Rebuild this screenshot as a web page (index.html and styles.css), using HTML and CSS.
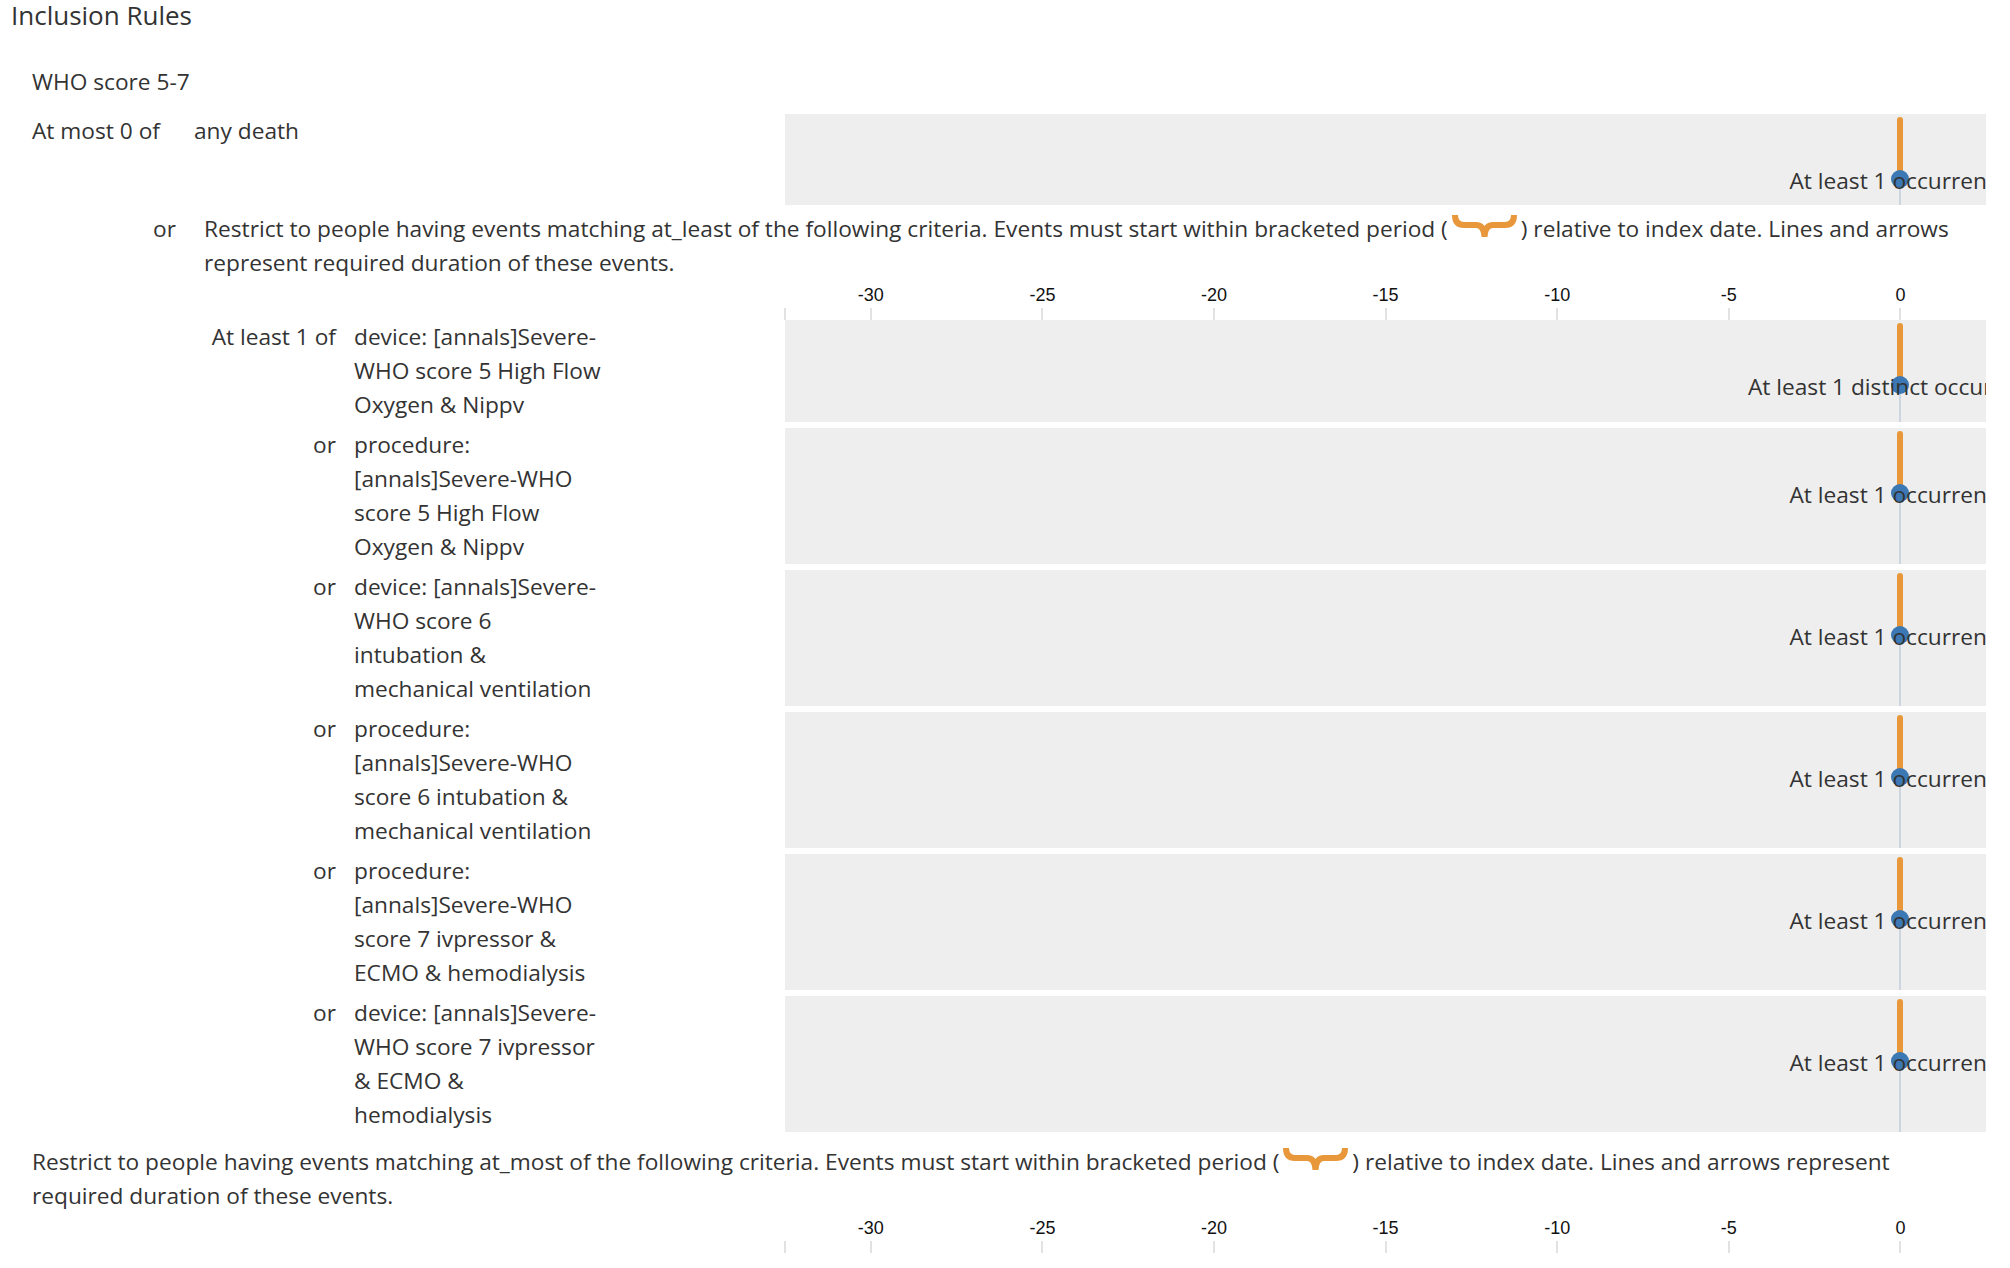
FILE: index.html
```html
<!DOCTYPE html>
<html>
<head>
<meta charset="utf-8">
<title>Inclusion Rules</title>
<link rel="stylesheet" href="styles.css">
</head>
<body>
<div class="page">
  <h1 class="title">Inclusion Rules</h1>
  <section class="rule">
    <div class="rule-name">WHO score 5-7</div>

    <div class="crit crit-top">
      <div class="crit-left">
        <span class="top-label">At most 0 of</span>
        <span class="top-desc">any death</span>
      </div>
      <div class="chart chart-top">
        <span class="stem"></span><span class="grid0"></span><span class="dot"></span>
        <span class="occ">At least 1 occurrence</span>
      </div>
    </div>

    <div class="group-head">
      <span class="or-word">or</span>
      <p class="restrict">Restrict to people having events matching at_least of the following criteria. Events must start within bracketed period (<svg class="brace" width="67" height="22" viewBox="0 0 67 22"><path d="M4 0 Q4 10 13 10 L25 10 Q33 10 33.5 22 Q34 10 42 10 L54 10 Q63 10 63 0"/></svg>) relative to index date. Lines and arrows represent required duration of these events.</p>
    </div>

    <div class="axis-row">
      <div class="axis">
        <span class="tick" style="left:0px"></span>
        <span class="tick" style="left:85.8px"><span class="tick-label">-30</span></span>
        <span class="tick" style="left:257.4px"><span class="tick-label">-25</span></span>
        <span class="tick" style="left:429px"><span class="tick-label">-20</span></span>
        <span class="tick" style="left:600.6px"><span class="tick-label">-15</span></span>
        <span class="tick" style="left:772.2px"><span class="tick-label">-10</span></span>
        <span class="tick" style="left:943.8px"><span class="tick-label">-5</span></span>
        <span class="tick" style="left:1115.4px"><span class="tick-label">0</span></span>
      </div>
    </div>

    <div class="crit nested">
      <div class="crit-left">
        <span class="n-label">At least 1 of</span>
        <span class="n-desc">device: [annals]Severe-<br>WHO score 5 High Flow<br>Oxygen &amp; Nippv</span>
      </div>
      <div class="chart">
        <span class="stem"></span><span class="grid0"></span><span class="dot"></span>
        <span class="occ">At least 1 distinct occurrence</span>
      </div>
    </div>

    <div class="crit nested">
      <div class="crit-left">
        <span class="n-label">or</span>
        <span class="n-desc">procedure:<br>[annals]Severe-WHO<br>score 5 High Flow<br>Oxygen &amp; Nippv</span>
      </div>
      <div class="chart">
        <span class="stem"></span><span class="grid0"></span><span class="dot"></span>
        <span class="occ">At least 1 occurrence</span>
      </div>
    </div>

    <div class="crit nested">
      <div class="crit-left">
        <span class="n-label">or</span>
        <span class="n-desc">device: [annals]Severe-<br>WHO score 6<br>intubation &amp;<br>mechanical ventilation</span>
      </div>
      <div class="chart">
        <span class="stem"></span><span class="grid0"></span><span class="dot"></span>
        <span class="occ">At least 1 occurrence</span>
      </div>
    </div>

    <div class="crit nested">
      <div class="crit-left">
        <span class="n-label">or</span>
        <span class="n-desc">procedure:<br>[annals]Severe-WHO<br>score 6 intubation &amp;<br>mechanical ventilation</span>
      </div>
      <div class="chart">
        <span class="stem"></span><span class="grid0"></span><span class="dot"></span>
        <span class="occ">At least 1 occurrence</span>
      </div>
    </div>

    <div class="crit nested">
      <div class="crit-left">
        <span class="n-label">or</span>
        <span class="n-desc">procedure:<br>[annals]Severe-WHO<br>score 7 ivpressor &amp;<br>ECMO &amp; hemodialysis</span>
      </div>
      <div class="chart">
        <span class="stem"></span><span class="grid0"></span><span class="dot"></span>
        <span class="occ">At least 1 occurrence</span>
      </div>
    </div>

    <div class="crit nested">
      <div class="crit-left">
        <span class="n-label">or</span>
        <span class="n-desc">device: [annals]Severe-<br>WHO score 7 ivpressor<br>&amp; ECMO &amp;<br>hemodialysis</span>
      </div>
      <div class="chart">
        <span class="stem"></span><span class="grid0"></span><span class="dot"></span>
        <span class="occ">At least 1 occurrence</span>
      </div>
    </div>

    <p class="restrict-bottom">Restrict to people having events matching at_most of the following criteria. Events must start within bracketed period (<svg class="brace" width="67" height="22" viewBox="0 0 67 22"><path d="M4 0 Q4 10 13 10 L25 10 Q33 10 33.5 22 Q34 10 42 10 L54 10 Q63 10 63 0"/></svg>) relative to index date. Lines and arrows represent required duration of these events.</p>

    <div class="axis-row">
      <div class="axis">
        <span class="tick" style="left:0px"></span>
        <span class="tick" style="left:85.8px"><span class="tick-label">-30</span></span>
        <span class="tick" style="left:257.4px"><span class="tick-label">-25</span></span>
        <span class="tick" style="left:429px"><span class="tick-label">-20</span></span>
        <span class="tick" style="left:600.6px"><span class="tick-label">-15</span></span>
        <span class="tick" style="left:772.2px"><span class="tick-label">-10</span></span>
        <span class="tick" style="left:943.8px"><span class="tick-label">-5</span></span>
        <span class="tick" style="left:1115.4px"><span class="tick-label">0</span></span>
      </div>
    </div>
  </section>
</div>
</body>
</html>
```

FILE: styles.css
```css
* { box-sizing: border-box; }
html, body { margin: 0; padding: 0; background: #fff; }
body {
  font-family: "Open Sans", "Noto Sans", sans-serif;
  font-size: 22.7px;
  line-height: 34px;
  color: #333;
  overflow: hidden;
}
.page { width: 1986px; }
.title {
  margin: 0;
  padding-left: 11px;
  font-size: 26px;
  line-height: 30px;
  font-weight: 400;
  color: #333;
}
.rule { margin-top: 35px; }
.rule-name { padding-left: 32px; }

.crit { display: flex; }
.crit-left { flex: 1; display: flex; min-width: 0; align-items: flex-start; }
.chart {
  width: 1201px;
  flex-shrink: 0;
  background: #eeeeee;
  position: relative;
  overflow: hidden;
}

.crit-top { margin-top: 15px; }
.crit-top .crit-left { padding-left: 32px; }
.top-label { width: 162px; flex-shrink: 0; }
.chart-top { height: 91px; }

.group-head {
  display: flex;
  margin-top: 7px;
  padding-left: 153px;
  padding-right: 18px;
}
.or-word { width: 51px; flex-shrink: 0; }
.restrict { margin: 0; flex: 1; }

.brace { margin: 0 3px; vertical-align: baseline; }
.brace path {
  fill: none;
  stroke: #e8983a;
  stroke-width: 6;
  stroke-linejoin: round;
}

.axis-row { display: flex; justify-content: flex-end; }
.axis { width: 1201px; height: 40px; position: relative; }
.tick {
  position: absolute;
  bottom: 0;
  width: 2px;
  height: 12px;
  margin-left: -1px;
  background: #e2e2e2;
}
.tick-label {
  position: absolute;
  bottom: 16px;
  left: 1px;
  transform: translateX(-50%);
  font-family: "Liberation Sans", Arial, sans-serif;
  font-size: 18px;
  line-height: 18px;
  color: #111;
  white-space: nowrap;
}

.nested { margin-bottom: 6px; }
.nested .crit-left { padding-left: 206px; }
.n-label { width: 130px; flex-shrink: 0; text-align: right; }
.n-desc { margin-left: 18px; white-space: nowrap; }

.stem {
  position: absolute;
  left: 1112px;
  top: 3px;
  width: 6px;
  height: 62px;
  border-radius: 3px;
  background: #e8983a;
}
.grid0 {
  position: absolute;
  left: 1114px;
  top: 65px;
  bottom: 0;
  width: 2px;
  background: #cdd6e0;
}
.dot {
  position: absolute;
  left: 1106px;
  top: 56px;
  width: 18px;
  height: 18px;
  border-radius: 50%;
  background: #3b78b4;
}
.occ {
  position: absolute;
  left: 1115px;
  top: 67px;
  transform: translate(-50%, -50%);
  white-space: nowrap;
  color: #333;
}

.restrict-bottom {
  margin: 13px 0 0;
  padding-left: 32px;
  padding-right: 18px;
}
```
